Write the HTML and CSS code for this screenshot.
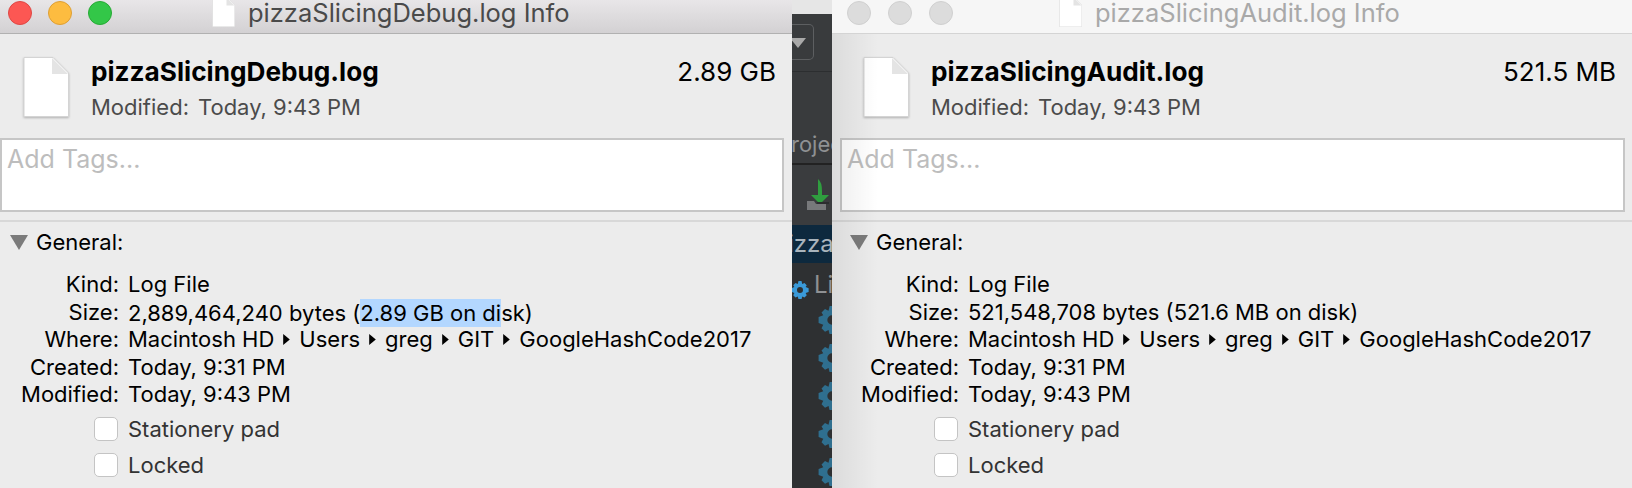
FILE: index.html
```html
<!DOCTYPE html>
<html lang="en">
<head>
    <meta charset="UTF-8">
    <title>Get Info windows</title>
    <link rel="stylesheet" href="styles.css">
</head>
<body>
    <svg class="defs" width="0" height="0">
        <symbol id="page" viewBox="0 0 46 60">
            <path d="M1 .5H30L45.500 16V59.500H1Z" fill="#fff" stroke="#d4d4d4"/>
            <path d="M29 1V17H45Z" fill="#e4e4e4"/>
        </symbol>
        <symbol id="gear" viewBox="0 0 24 24">
            <path fill-rule="evenodd" d="M10 0h4l1 4 3-1.500 3 3L19.500 8l4 1.500v5l-4 1.500 1.500 3-3 3-3-1.500-1 4h-4l-1-4-3 1.500-3-3L4.500 16l-4-1.500v-5l4-1.500L3 5.500l3-3L9 4ZM12 8a4 4 0 1 0 0 8 4 4 0 0 0 0-8Z"/>
        </symbol>
        <symbol id="crumb" viewBox="0 0 6 10">
            <path d="M0 0L6 5L0 10Z"/>
        </symbol>
    </svg>

    <div class="screen">
        <section class="window">
            <header class="titlebar">
                <div class="lights">
                    <span class="light red"></span>
                    <span class="light yellow"></span>
                    <span class="light green"></span>
                </div>
                <div class="title title-left">
                    <svg class="title-icon"><use href="#page"/></svg>
                    <span>pizzaSlicingDebug.log Info</span>
                </div>
            </header>
            <div class="summary">
                <svg class="file-icon"><use href="#page"/></svg>
                <div class="summary-text">
                    <div class="file-name">pizzaSlicingDebug.log</div>
                    <div class="file-modified"><span class="mod-label">Modified:</span>Today, 9:43 PM</div>
                </div>
                <div class="file-size">2.89 GB</div>
            </div>
            <div class="tags">Add Tags...</div>
            <div class="section-head"><span class="disclosure"></span>General:</div>
            <div class="props">
                <div class="key">Kind:</div><div>Log File</div>
                <div class="key">Size:</div><div>2,889,464,240 bytes (<span class="selected">2.89 GB on di</span>sk)</div>
                <div class="key">Where:</div>
                <div class="path">Macintosh HD<svg class="crumb"><use href="#crumb"/></svg>Users<svg class="crumb"><use href="#crumb"/></svg>greg<svg class="crumb"><use href="#crumb"/></svg>GIT<svg class="crumb"><use href="#crumb"/></svg>GoogleHashCode2017</div>
                <div class="key">Created:</div><div>Today, 9:31 PM</div>
                <div class="key">Modified:</div><div>Today, 9:43 PM</div>
            </div>
            <div class="checks">
                <div class="check"><span class="box"></span>Stationery pad</div>
                <div class="check"><span class="box"></span>Locked</div>
            </div>
        </section>

        <div class="behind">
            <div class="behind-top"></div>
            <div class="behind-toolbar"><span class="drop"><span class="drop-arrow"></span></span></div>
            <div class="behind-tab">rojec</div>
            <div class="behind-tools">
                <svg class="download" viewBox="0 0 26 32">
                    <path d="M11 0Q15 3 15 12V16H22L13 25L4 16H11Z" fill="#2f9e3f"/>
                    <path d="M0 22H7L9 25H19V31H0Z" fill="#77797b"/>
                    <path d="M10 23H22V25H10Z" fill="#2b2d2f"/>
                </svg>
            </div>
            <div class="behind-selected">izza</div>
            <div class="behind-tree">
                <div class="tree-root"><svg class="gear gear-root"><use href="#gear"/></svg>Li</div>
                <svg class="gear"><use href="#gear"/></svg>
                <svg class="gear"><use href="#gear"/></svg>
                <svg class="gear"><use href="#gear"/></svg>
                <svg class="gear"><use href="#gear"/></svg>
                <svg class="gear"><use href="#gear"/></svg>
            </div>
        </div>

        <section class="window window-inactive">
            <header class="titlebar">
                <div class="lights">
                    <span class="light"></span>
                    <span class="light"></span>
                    <span class="light"></span>
                </div>
                <div class="title title-right">
                    <svg class="title-icon"><use href="#page"/></svg>
                    <span>pizzaSlicingAudit.log Info</span>
                </div>
            </header>
            <div class="summary">
                <svg class="file-icon"><use href="#page"/></svg>
                <div class="summary-text">
                    <div class="file-name">pizzaSlicingAudit.log</div>
                    <div class="file-modified"><span class="mod-label">Modified:</span>Today, 9:43 PM</div>
                </div>
                <div class="file-size">521.5 MB</div>
            </div>
            <div class="tags">Add Tags...</div>
            <div class="section-head"><span class="disclosure"></span>General:</div>
            <div class="props">
                <div class="key">Kind:</div><div>Log File</div>
                <div class="key">Size:</div><div>521,548,708 bytes (521.6 MB on disk)</div>
                <div class="key">Where:</div>
                <div class="path">Macintosh HD<svg class="crumb"><use href="#crumb"/></svg>Users<svg class="crumb"><use href="#crumb"/></svg>greg<svg class="crumb"><use href="#crumb"/></svg>GIT<svg class="crumb"><use href="#crumb"/></svg>GoogleHashCode2017</div>
                <div class="key">Created:</div><div>Today, 9:31 PM</div>
                <div class="key">Modified:</div><div>Today, 9:43 PM</div>
            </div>
            <div class="checks">
                <div class="check"><span class="box"></span>Stationery pad</div>
                <div class="check"><span class="box"></span>Locked</div>
            </div>
        </section>
    </div>
</body>
</html>
```

FILE: styles.css
```css
html, body {
    margin: 0;
    height: 488px;
    overflow: hidden;
}

body {
    font-family: Inter, "Liberation Sans", sans-serif;
    color: #000;
}

.defs {
    display: block;
    height: 0;
}

.screen {
    display: flex;
    width: 1632px;
    height: 488px;
}

/* info windows */
.window {
    width: 792px;
    flex: none;
    background: #ececec;
    overflow: hidden;
    position: relative;
}

.window-inactive {
    width: 800px;
}

/* the soft shade along the left edge of the back window */
.window-inactive::after {
    content: "";
    position: absolute;
    left: 0;
    top: 34px;
    bottom: 0;
    width: 46px;
    background: linear-gradient(to right, rgba(0, 0, 0, 0.07), rgba(0, 0, 0, 0));
}

.titlebar {
    height: 33px;
    display: flex;
    align-items: center;
    position: relative;
    background: linear-gradient(#e8e6e8, #d3d1d3);
    border-bottom: 1px solid #b1b1b1;
}

.window-inactive .titlebar {
    background: #f6f6f6;
    border-bottom-color: #d4d4d4;
}

.lights {
    display: flex;
    gap: 16px;
    padding-left: 8px;
    margin-top: -8px;
}

.window-inactive .lights {
    gap: 17px;
    padding-left: 15px;
}

.light {
    width: 24px;
    height: 24px;
    border-radius: 50%;
    background: #dcdcdc;
    border: 1px solid #d0d0d0;
    box-sizing: border-box;
}

.light.red { background: #fc5753; border-color: #df4744; }
.light.yellow { background: #fdbc40; border-color: #de9f34; }
.light.green { background: #33c748; border-color: #27aa35; }

.title {
    display: flex;
    align-items: center;
    font-size: 25.500px;
    line-height: 24px;
    color: #4a4a4a;
    margin-top: -7px;
}

.title-left {
    margin-left: 100px;
}

.title-right {
    margin-left: 106px;
    color: #a9a9a9;
}

.title-icon {
    width: 23px;
    height: 30px;
    margin-right: 13px;
    margin-top: -3px;
}

.summary {
    height: 104px;
    display: flex;
    position: relative;
    box-sizing: border-box;
    padding: 22px 0 0 23px;
}

.window-inactive .summary {
    padding-left: 31px;
}

.file-icon {
    width: 46px;
    height: 60px;
    margin-top: 1px;
    filter: drop-shadow(0 1px 1px rgba(0, 0, 0, 0.25));
}

.summary-text {
    margin-left: 22px;
}

.file-name {
    font-size: 26.200px;
    font-weight: 700;
    line-height: 28px;
    margin-top: 2px;
}

.file-modified {
    font-size: 22px;
    line-height: 24px;
    margin-top: 9px;
    color: #4b4b4b;
}

.mod-label {
    margin-right: 9px;
}

.file-size {
    margin-left: auto;
    margin-right: 16px;
    margin-top: 2px;
    font-size: 26px;
    line-height: 28px;
}

.tags {
    width: 784px;
    height: 74px;
    box-sizing: border-box;
    background: #fff;
    border: 2px solid #c6c6c6;
    font-size: 25px;
    line-height: 28px;
    color: #bdbdbd;
    padding: 5px 5px;
}

.window-inactive .tags {
    margin-left: 8px;
    width: 785px;
}

.section-head {
    margin-top: 8px;
    border-top: 2px solid #d8d8d8;
    height: 40px;
    display: flex;
    align-items: center;
    font-size: 22px;
    padding-left: 10px;
    gap: 8px;
}

.window-inactive .section-head {
    padding-left: 18px;
}

.disclosure {
    width: 0;
    height: 0;
    border-left: 9px solid transparent;
    border-right: 9px solid transparent;
    border-top: 15px solid #7b7b7b;
}

.props {
    display: grid;
    grid-template-columns: 119px 1fr;
    column-gap: 9px;
    grid-auto-rows: 27.500px;
    margin-top: 9px;
    font-size: 22px;
    line-height: 27.500px;
}

.window-inactive .props {
    padding-left: 8px;
}

.key {
    text-align: right;
}

.selected {
    background: #b3d7ff;
    display: inline-block;
    line-height: 28px;
}

.path {
    display: flex;
    align-items: center;
}

.crumb {
    width: 7px;
    height: 11px;
    margin: 0 9px;
    flex: none;
}

.checks {
    margin-top: 2px;
    padding-left: 94px;
}

.window-inactive .checks {
    padding-left: 102px;
}

.check {
    height: 36px;
    display: flex;
    align-items: center;
    gap: 10px;
    font-size: 22px;
    color: #333;
}

.box {
    width: 24px;
    height: 24px;
    box-sizing: border-box;
    background: #fff;
    border: 1px solid #c4c4c4;
    border-radius: 5px;
}

/* strip of the dark editor showing between the windows */
.behind {
    width: 40px;
    flex: none;
    background: #2e3032;
    overflow: hidden;
    color: #8f9193;
    font-size: 22px;
}

.behind-top {
    height: 14px;
    background: #e6e6e6;
}

.behind-toolbar {
    height: 58px;
    background: #393b3d;
    border-bottom: 1px solid #2c2e30;
    box-sizing: border-box;
    padding-top: 10px;
}

.drop {
    display: block;
    width: 22px;
    height: 36px;
    box-sizing: border-box;
    border: 1px solid #5d5f61;
    border-left: 0;
    border-radius: 0 5px 5px 0;
    padding-top: 13px;
}

.drop-arrow {
    display: block;
    width: 0;
    height: 0;
    border-left: 8px solid transparent;
    border-right: 8px solid transparent;
    border-top: 10px solid #a9a9a9;
    margin-left: -2px;
}

.behind-tab {
    height: 93px;
    box-sizing: border-box;
    padding-top: 57px;
    line-height: 30px;
    background: #393b3d;
    border-bottom: 2px solid #222;
    white-space: nowrap;
    margin-left: -1px;
}

.behind-tools {
    height: 60px;
    box-sizing: border-box;
    padding: 14px 0 0 15px;
    background: #3a3c3e;
}

.download {
    display: block;
    width: 26px;
    height: 32px;
}

.behind-selected {
    height: 38px;
    line-height: 38px;
    font-size: 24px;
    background: #0d293e;
    color: #a9b4bc;
    margin-left: -4px;
    white-space: nowrap;
}

.tree-root {
    height: 43px;
    display: flex;
    align-items: center;
    gap: 5px;
    margin-left: -1px;
    line-height: 30px;
    font-size: 24px;
}

.gear {
    display: block;
    width: 28px;
    height: 28px;
    margin: 0 0 10px 26px;
    fill: #2f6f8f;
    flex: none;
}

.gear-root {
    width: 18px;
    height: 18px;
    margin: 10px 0 0;
    fill: #3a9ad9;
}
```
